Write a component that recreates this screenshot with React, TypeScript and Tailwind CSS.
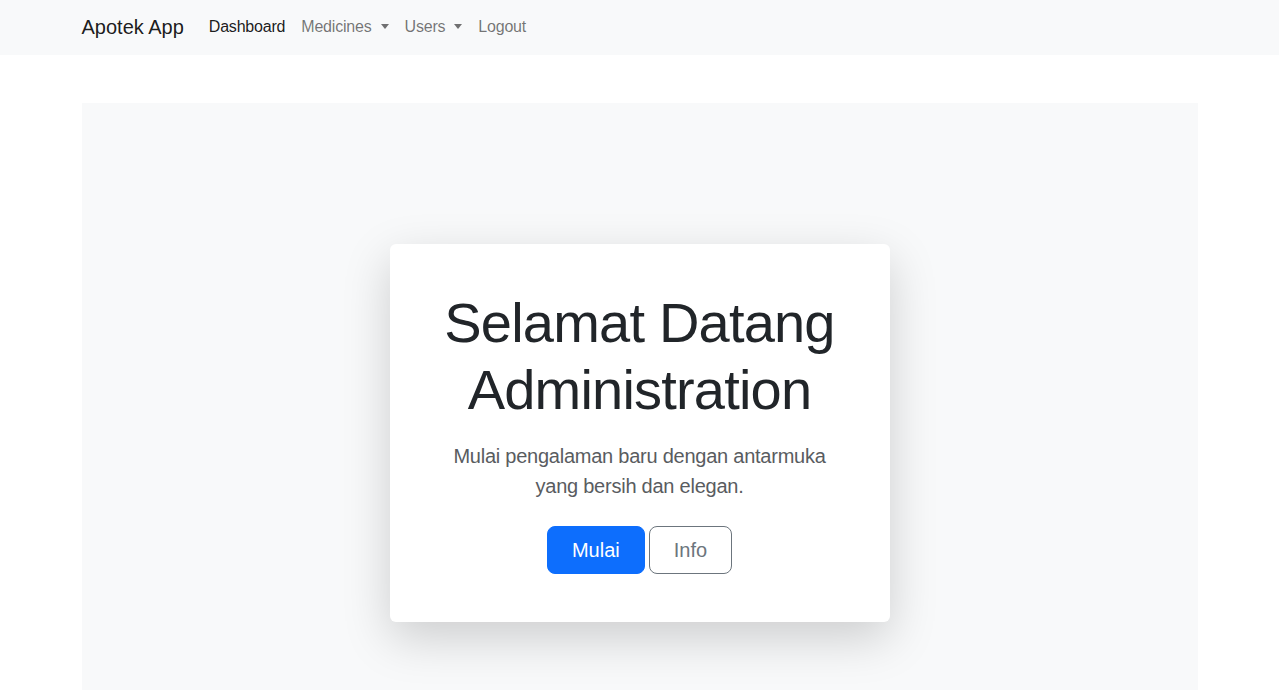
import React from "react";

const Caret = () => (
  <span className="ml-[9px] inline-block w-0 h-0 border-t-[5px] border-t-current border-x-[4.8px] border-x-transparent" />
);

export default function App() {
  return (
    <div className="min-h-screen bg-white text-[#212529]" style={{ fontFamily: '"Liberation Sans", Arial, sans-serif' }}>
      <nav className="bg-[#f8f9fa] h-[55px]">
        <div className="mx-auto w-[1140px] px-3 h-full flex items-center pb-[2px]">
          <a className="text-[20px] leading-[30px] text-black/90 mr-[17px]">Apotek App</a>
          <div className="flex items-center text-[16px] leading-6 tracking-[-0.2px]">
            <a className="px-2 py-2 text-black/90">Dashboard</a>
            <a className="px-2 py-2 text-black/55 flex items-center">Medicines<Caret /></a>
            <a className="px-2 py-2 text-black/55 flex items-center">Users<Caret /></a>
            <a className="px-2 py-2 text-black/55">Logout</a>
          </div>
        </div>
      </nav>
      <div className="mx-auto w-[1140px] px-3 mt-12">
        <div className="bg-[#f8f9fa] pt-[141px] pb-[141px] flex justify-center">
          <div className="w-[500px] bg-white rounded-[6px] shadow-[0_16px_48px_rgba(0,0,0,0.175)] p-12 text-center">
            <h1 className="text-[56px] leading-[1.2] font-light tracking-[-0.8px] text-[#212529] -mt-[3px] mb-[18px]">
              Selamat Datang Administration
            </h1>
            <p className="text-[20px] leading-[30px] tracking-[-0.24px] text-[#595c5f] mb-[25px]">
              Mulai pengalaman baru dengan antarmuka yang bersih dan elegan.
            </p>
            <div className="flex justify-center gap-1">
              <button className="h-12 px-6 text-[20px] leading-[30px] text-white bg-[#0d6efd] border border-[#0d6efd] rounded-[8px]">
                Mulai
              </button>
              <button className="h-12 px-6 text-[20px] leading-[30px] text-[#6c757d] bg-transparent border border-[#6c757d] rounded-[8px]">
                Info
              </button>
            </div>
          </div>
        </div>
      </div>
    </div>
  );
}
